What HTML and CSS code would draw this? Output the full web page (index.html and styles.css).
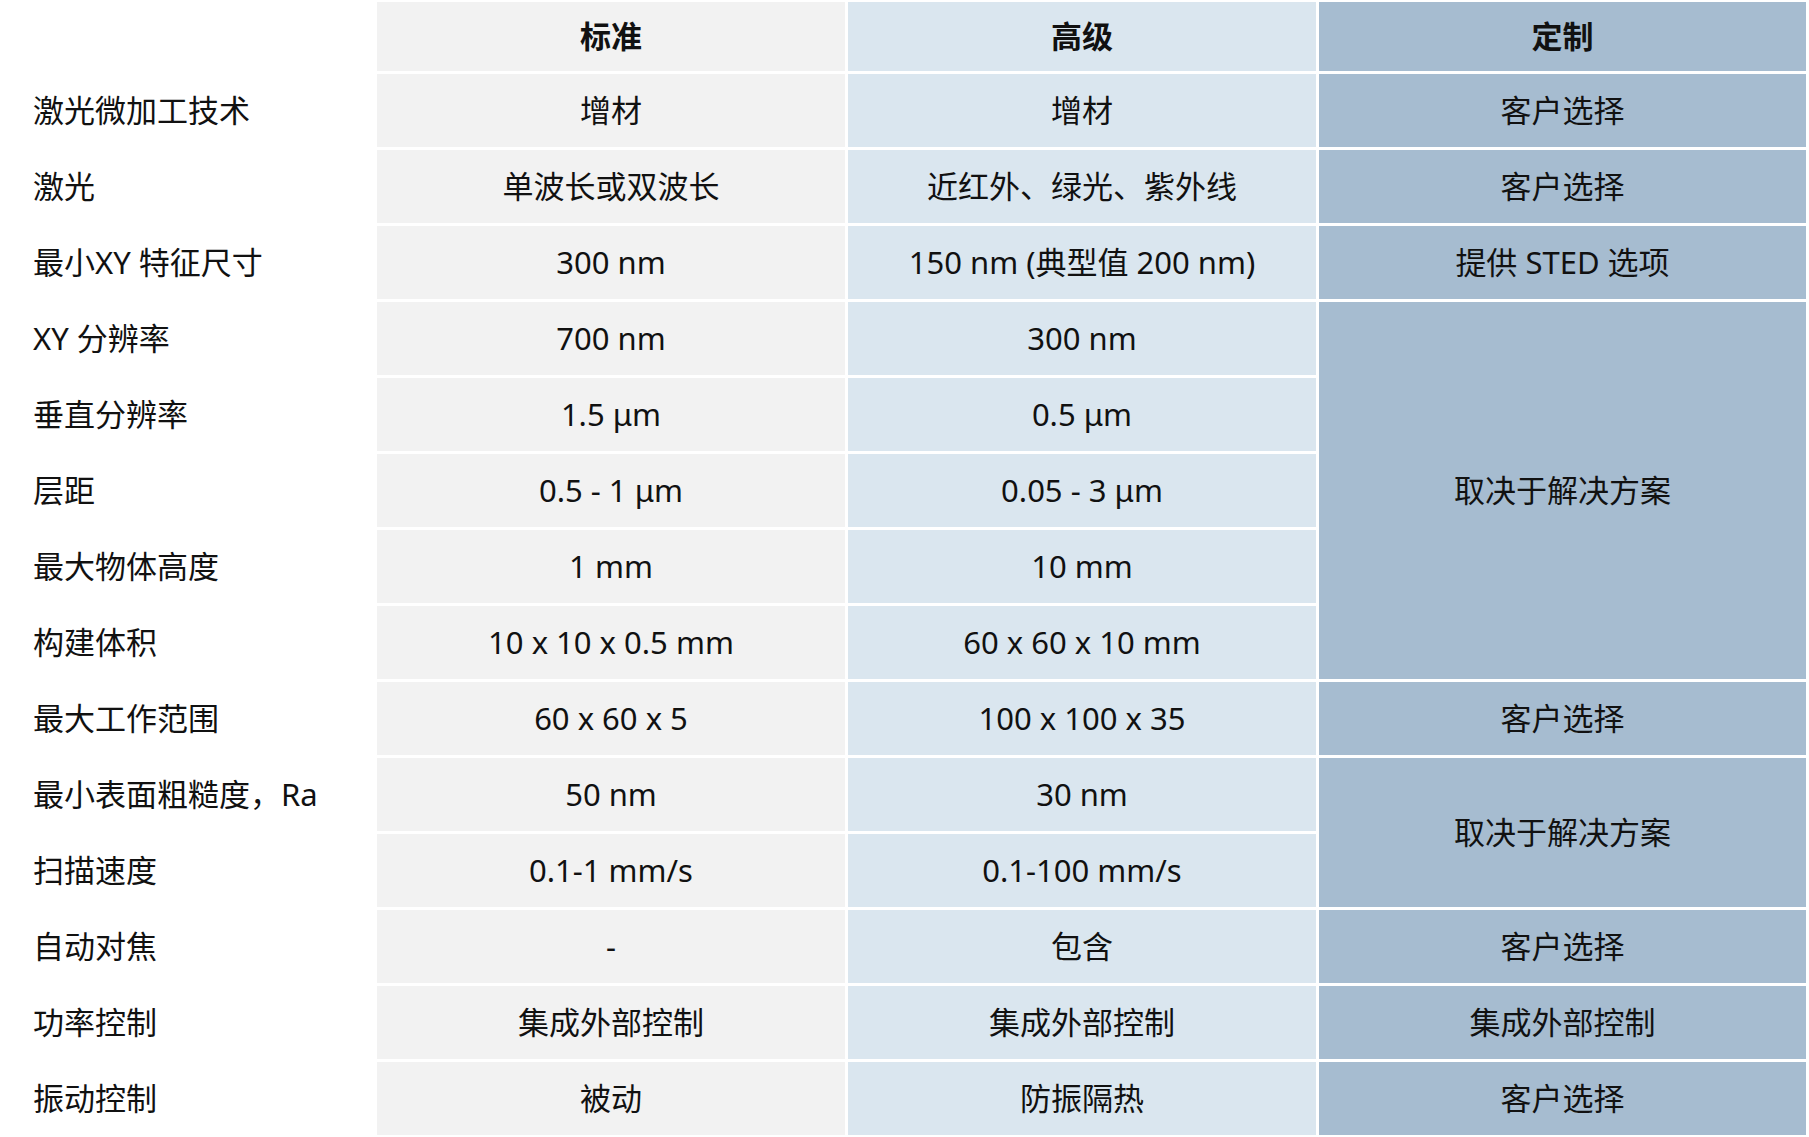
FILE: index.html
```html
<!DOCTYPE html>
<html lang="zh-CN">
<head>
<meta charset="utf-8">
<title>规格对比</title>
<link rel="stylesheet" href="styles.css">
</head>
<body>
<div class="spec">
  <div class="cell label head-blank"></div>
  <div class="cell std head">标准</div>
  <div class="cell adv head">高级</div>
  <div class="cell cus head">定制</div>

  <div class="cell label">激光微加工技术</div>
  <div class="cell std">增材</div>
  <div class="cell adv">增材</div>
  <div class="cell cus">客户选择</div>

  <div class="cell label">激光</div>
  <div class="cell std">单波长或双波长</div>
  <div class="cell adv">近红外、绿光、紫外线</div>
  <div class="cell cus">客户选择</div>

  <div class="cell label">最小XY 特征尺寸</div>
  <div class="cell std">300 nm</div>
  <div class="cell adv">150 nm (典型值 200 nm)</div>
  <div class="cell cus">提供 STED 选项</div>

  <div class="cell label">XY 分辨率</div>
  <div class="cell std">700 nm</div>
  <div class="cell adv">300 nm</div>
  <div class="cell cus span5">取决于解决方案</div>

  <div class="cell label">垂直分辨率</div>
  <div class="cell std">1.5 μm</div>
  <div class="cell adv">0.5 μm</div>

  <div class="cell label">层距</div>
  <div class="cell std">0.5 - 1 μm</div>
  <div class="cell adv">0.05 - 3 μm</div>

  <div class="cell label">最大物体高度</div>
  <div class="cell std">1 mm</div>
  <div class="cell adv">10 mm</div>

  <div class="cell label">构建体积</div>
  <div class="cell std">10 x 10 x 0.5 mm</div>
  <div class="cell adv">60 x 60 x 10 mm</div>

  <div class="cell label">最大工作范围</div>
  <div class="cell std">60 x 60 x 5</div>
  <div class="cell adv">100 x 100 x 35</div>
  <div class="cell cus">客户选择</div>

  <div class="cell label">最小表面粗糙度，Ra</div>
  <div class="cell std">50 nm</div>
  <div class="cell adv">30 nm</div>
  <div class="cell cus span2">取决于解决方案</div>

  <div class="cell label">扫描速度</div>
  <div class="cell std">0.1-1 mm/s</div>
  <div class="cell adv">0.1-100 mm/s</div>

  <div class="cell label">自动对焦</div>
  <div class="cell std">-</div>
  <div class="cell adv">包含</div>
  <div class="cell cus">客户选择</div>

  <div class="cell label">功率控制</div>
  <div class="cell std">集成外部控制</div>
  <div class="cell adv">集成外部控制</div>
  <div class="cell cus">集成外部控制</div>

  <div class="cell label">振动控制</div>
  <div class="cell std">被动</div>
  <div class="cell adv">防振隔热</div>
  <div class="cell cus">客户选择</div>
</div>
</body>
</html>
```

FILE: styles.css
```css
html, body {
  margin: 0;
  padding: 0;
  background: #ffffff;
}

body {
  font-family: "Noto Sans", "Noto Sans CJK SC", sans-serif;
  color: #111111;
  font-size: 31px;
}

.spec {
  display: grid;
  grid-template-columns: 374px 468px 468px 487px;
  grid-template-rows: 69px;
  grid-auto-rows: 73px;
  gap: 3px;
  padding-top: 2px;
  width: 1806px;
}

.cell {
  display: flex;
  align-items: center;
  justify-content: center;
  line-height: 1;
  white-space: nowrap;
}

.label {
  justify-content: flex-start;
  padding-left: 33px;
  background: transparent;
}

.std {
  background: #f2f2f2;
}

.adv {
  background: #dae6ef;
}

.cus {
  background: #a6bcd0;
}

.head {
  font-weight: 700;
}

.span5 {
  grid-row: span 5;
}

.span2 {
  grid-row: span 2;
}
```
